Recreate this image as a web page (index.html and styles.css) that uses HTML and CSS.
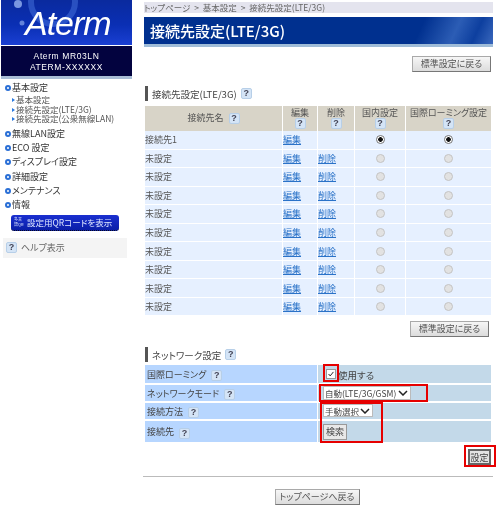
FILE: index.html
```html
<!DOCTYPE html>
<html lang="ja">
<head>
<meta charset="utf-8">
<title>接続先設定(LTE/3G)</title>
<link rel="stylesheet" href="styles.css">
</head>
<body>
<aside class="side">
  <div class="logo">
    <svg class="logo-art" viewBox="0 0 130 45" aria-hidden="true">
      <circle cx="52" cy="2" r="22" fill="none" stroke="#4f7fe6" stroke-opacity=".45" stroke-width="6"/>
      <circle cx="17" cy="4" r="4" fill="#9fbcf5" fill-opacity=".75"/>
      <circle cx="21" cy="23" r="2.5" fill="#9fbcf5" fill-opacity=".6"/>
    </svg>
    <span class="logo-text">Aterm</span>
  </div>
  <div class="model">Aterm MR03LN<br>ATERM-XXXXXX</div>
  <div class="model-foot"></div>
  <nav class="menu">
    <div class="m m-first"><i class="dot"></i>基本設定</div>
    <div class="s"><i class="tri"></i>基本設定</div>
    <div class="s"><i class="tri"></i>接続先設定(LTE/3G)</div>
    <div class="s s-last"><i class="tri"></i>接続先設定(公衆無線LAN)</div>
    <div class="m"><i class="dot"></i>無線LAN設定</div>
    <div class="m"><i class="dot"></i>ECO 設定</div>
    <div class="m"><i class="dot"></i>ディスプレイ設定</div>
    <div class="m"><i class="dot"></i>詳細設定</div>
    <div class="m"><i class="dot"></i>メンテナンス</div>
    <div class="m"><i class="dot"></i>情報</div>
  </nav>
  <div class="qr"><span class="qr-mark">多言<br>語QR</span><span>設定用QRコードを表示</span></div>
  <div class="help"><span class="q">?</span>ヘルプ表示</div>
</aside>

<main class="main">
  <div class="crumb">トップページ &gt; 基本設定 &gt; 接続先設定(LTE/3G)</div>
  <h1 class="title">接続先設定(LTE/3G)</h1>
  <div class="title-foot"></div>

  <div class="btn-row top"><button class="btn wide">標準設定に戻る</button></div>

  <h2 class="sec first"><span>接続先設定(LTE/3G)</span><span class="q">?</span></h2>
  <table class="list">
    <colgroup><col class="c1"><col class="c2"><col class="c3"><col class="c4"><col class="c5"></colgroup>
    <thead>
      <tr>
        <th>接続先名<span class="q gap">?</span></th>
        <th>編集<br><span class="q">?</span></th>
        <th>削除<br><span class="q">?</span></th>
        <th>国内設定<br><span class="q">?</span></th>
        <th>国際ローミング設定<br><span class="q">?</span></th>
      </tr>
    </thead>
    <tbody>
      <tr><td>接続先1</td><td><a href="#">編集</a></td><td></td><td class="ctr"><i class="radio on"></i></td><td class="ctr"><i class="radio on"></i></td></tr>
      <tr><td>未設定</td><td><a href="#">編集</a></td><td><a href="#">削除</a></td><td class="ctr"><i class="radio"></i></td><td class="ctr"><i class="radio"></i></td></tr>
      <tr><td>未設定</td><td><a href="#">編集</a></td><td><a href="#">削除</a></td><td class="ctr"><i class="radio"></i></td><td class="ctr"><i class="radio"></i></td></tr>
      <tr><td>未設定</td><td><a href="#">編集</a></td><td><a href="#">削除</a></td><td class="ctr"><i class="radio"></i></td><td class="ctr"><i class="radio"></i></td></tr>
      <tr><td>未設定</td><td><a href="#">編集</a></td><td><a href="#">削除</a></td><td class="ctr"><i class="radio"></i></td><td class="ctr"><i class="radio"></i></td></tr>
      <tr><td>未設定</td><td><a href="#">編集</a></td><td><a href="#">削除</a></td><td class="ctr"><i class="radio"></i></td><td class="ctr"><i class="radio"></i></td></tr>
      <tr><td>未設定</td><td><a href="#">編集</a></td><td><a href="#">削除</a></td><td class="ctr"><i class="radio"></i></td><td class="ctr"><i class="radio"></i></td></tr>
      <tr><td>未設定</td><td><a href="#">編集</a></td><td><a href="#">削除</a></td><td class="ctr"><i class="radio"></i></td><td class="ctr"><i class="radio"></i></td></tr>
      <tr><td>未設定</td><td><a href="#">編集</a></td><td><a href="#">削除</a></td><td class="ctr"><i class="radio"></i></td><td class="ctr"><i class="radio"></i></td></tr>
      <tr><td>未設定</td><td><a href="#">編集</a></td><td><a href="#">削除</a></td><td class="ctr"><i class="radio"></i></td><td class="ctr"><i class="radio"></i></td></tr>
    </tbody>
  </table>

  <div class="btn-row mid"><button class="btn wide">標準設定に戻る</button></div>

  <h2 class="sec second"><span>ネットワーク設定</span><span class="q">?</span></h2>
  <table class="net">
    <colgroup><col class="n1"><col></colgroup>
    <tr class="r1">
      <th>国際ローミング<span class="q gap">?</span></th>
      <td><span class="check-wrap"><i class="check"><svg viewBox="0 0 10 10" aria-hidden="true"><path d="M2 5l2 2.4L8 2.4" fill="none" stroke="#222" stroke-width="1.2"/></svg></i><span class="check-label">使用する</span><b class="mark mark-check"></b></span></td>
    </tr>
    <tr class="r2">
      <th>ネットワークモード<span class="q gap">?</span></th>
      <td><span class="sel-wrap"><select class="sel-a"><option>自動(LTE/3G/GSM)</option></select><b class="mark mark-mode"></b></span></td>
    </tr>
    <tr class="r3">
      <th>接続方法<span class="q gap">?</span></th>
      <td><span class="sel-wrap"><select class="sel-b"><option>手動選択</option></select><b class="mark mark-conn"></b></span></td>
    </tr>
    <tr class="r4">
      <th>接続先<span class="q gap">?</span></th>
      <td><button class="btn-plain">検索</button></td>
    </tr>
  </table>

  <div class="btn-row set"><span class="set-wrap"><button class="btn-set">設定</button><b class="mark mark-set"></b></span></div>

  <hr class="rule">
  <div class="btn-center"><button class="btn back">トップページへ戻る</button></div>
</main>
</body>
</html>
```
FILE: styles.css
```css
* { box-sizing: border-box; }
html, body { margin: 0; padding: 0; background: #fff; }
body {
  display: flex;
  width: 500px;
  height: 507px;
  overflow: hidden;
  font-family: "Noto Sans CJK JP", "Liberation Sans", sans-serif;
  font-feature-settings: "palt";
  font-size: 9px;
  color: #555;
  filter: blur(.25px);
}
.side { width: 131px; margin-left: 1px; flex: none; }
.logo {
  position: relative;
  height: 45px;
  overflow: hidden;
  background: linear-gradient(180deg, #0a2a9e 0%, #0a2fb4 55%, #1a3fd2 100%);
}
.logo-art { position: absolute; left: 0; top: 0; width: 130px; height: 45px; }
.logo-text {
  position: absolute;
  left: 24px;
  top: 3px;
  font-family: "Liberation Sans", sans-serif;
  font-style: italic;
  font-size: 34px;
  line-height: 40px;
  color: #fff;
  letter-spacing: -1px;
}
.model {
  height: 30px;
  margin-top: 1px;
  background: #03033f;
  color: #fff;
  text-align: center;
  font-family: "Liberation Sans", sans-serif;
  font-size: 8.5px;
  line-height: 10.5px;
  padding-top: 5px;
  letter-spacing: .6px;
}
.model-foot { height: 3px; background: #a9bdd6; }
.menu { padding-top: 1px; color: #333; }
.m { position: relative; height: 14.3px; line-height: 14px; padding-left: 11px; font-size: 9px; white-space: nowrap; color: #333; }
.m-first { margin-top: 1px; }
.s { position: relative; height: 9.5px; line-height: 9.5px; padding-left: 15px; font-size: 8.5px; white-space: nowrap; color: #555; }
.s-last { margin-bottom: 3px; }
.dot {
  position: absolute;
  left: 4px;
  top: 4px;
  width: 6px;
  height: 6px;
  border-radius: 50%;
  border: 2px solid #2a6fd6;
  background: #fff;
}
.tri {
  position: absolute;
  left: 11px;
  top: 3px;
  border-left: 3px solid #2a7ae0;
  border-top: 2px solid transparent;
  border-bottom: 2px solid transparent;
}
.qr {
  display: flex;
  align-items: center;
  gap: 4px;
  width: 108px;
  height: 16px;
  margin: 2px 0 0 10px;
  padding-left: 3px;
  border-radius: 3px;
  background: linear-gradient(180deg, #1a2fd0 0%, #0a1ea8 100%);
  border-bottom: 1px dotted #000;
  color: #dfe8ff;
  font-size: 8.5px;
  white-space: nowrap;
}
.qr-mark { font-size: 4px; line-height: 5px; width: 9px; flex: none; }
.help {
  display: flex;
  align-items: center;
  gap: 4px;
  width: 124px;
  height: 20px;
  margin: 7px 0 0 2px;
  padding-left: 3px;
  background: #f4f4f4;
  font-size: 9px;
  color: #666;
}
.q {
  display: inline-block;
  width: 11px;
  height: 11px;
  border-radius: 2px;
  background: #d4e4f6;
  border: 1px solid #b7cfe8;
  color: #445;
  font-family: "Liberation Sans", sans-serif;
  font-size: 9px;
  font-weight: 700;
  line-height: 9px;
  text-align: center;
  vertical-align: middle;
}
.gap { margin-left: 5px; }

.main { width: 349px; margin-left: 12px; flex: none; padding-top: 2px; }
.crumb {
  height: 11px;
  line-height: 11px;
  background: #e4e4ee;
  color: #666;
  font-size: 8.5px;
  word-spacing: 2px;
  white-space: nowrap;
}
.title {
  margin: 4px 0 0;
  height: 27px;
  padding-left: 6px;
  line-height: 27px;
  background: linear-gradient(115deg, #00308f 0%, #00308f 78%, #2c5db5 88%, #0d3f9f 94%, #3a68bd 100%);
  color: #fff;
  font-size: 15px;
  font-weight: 500;
}
.title-foot { height: 3px; background: #9fbcd8; }
.btn-row { display: flex; justify-content: flex-end; }
.top { margin-top: 9px; padding-right: 2px; }
.mid { margin-top: 5px; padding-right: 4px; }
.btn {
  height: 16px;
  padding: 0;
  border: 1px solid #a9a9a9;
  border-right-color: #777;
  border-bottom-color: #777;
  background: linear-gradient(180deg, #f6f6f6, #dcdcdc);
  color: #555;
  font-family: inherit;
  font-feature-settings: inherit;
  font-size: 9px;
  line-height: 14px;
}
.wide { width: 79px; }
.sec {
  display: flex;
  align-items: center;
  gap: 4px;
  height: 15px;
  margin: 0 0 0 1px;
  padding-left: 4px;
  border-left: 3px solid #555;
  font-size: 9.5px;
  font-weight: 400;
  color: #444;
  white-space: nowrap;
}
.first { margin-top: 14px; }
.second { margin-top: 10px; }

table { border-collapse: separate; table-layout: fixed; }
.list { width: 348px; margin: 5px 0 0; border-spacing: 1px 0; }
.c1 { width: 137px; } .c2 { width: 34px; } .c3 { width: 36px; } .c4 { width: 50px; } .c5 { width: 85px; }
.list th {
  height: 25px;
  padding: 0;
  background: #d8d4c8;
  color: #555;
  font-size: 9px;
  font-weight: 400;
  line-height: 10px;
  text-align: center;
}
.list td {
  height: 18.55px;
  padding: 0;
  background: #e6f0ff;
  border-bottom: 1.6px solid #fff;
  color: #555;
  font-size: 9px;
}
.list .ctr { text-align: center; padding: 0; line-height: 0; }
a { color: #2a72c8; font-size: 9px; }
.radio {
  display: inline-block;
  width: 9px;
  height: 9px;
  border-radius: 50%;
  border: 1px solid #c4c4c4;
  background: #e2e2e2;
}
.radio.on { border-color: #777; background: radial-gradient(circle, #111 0 2px, #fff 2.6px); }

.net { width: 348px; margin: 3px 0 0; border-spacing: 1px 0; }
.n1 { width: 172px; }
.net th {
  padding: 0 0 0 2px;
  background: #b7d6ff;
  border-bottom: 2px solid #fff;
  color: #444;
  font-size: 9px;
  font-weight: 400;
  text-align: left;
  white-space: nowrap;
}
.net td {
  padding: 0 0 0 5px;
  background: #c3d9e9;
  border-bottom: 2px solid #fff;
  font-size: 9.5px;
  color: #444;
}
.r1 th, .r1 td { height: 20px; }
.r2 th, .r2 td { height: 18px; }
.r3 th, .r3 td { height: 18px; }
.r4 th, .r4 td { height: 21px; border-bottom: 0; }
.check-wrap, .sel-wrap { position: relative; display: inline-block; line-height: 0; }
.check-wrap { display: flex; align-items: flex-end; gap: 2px; line-height: 12px; padding-left: 3px; }
.check-label { position: relative; top: 1px; }
.check {
  display: block;
  width: 10px;
  height: 10px;
  margin-bottom: 1px;
  background: #fff;
  border: 1px solid #999;
}
.check svg { display: block; width: 8px; height: 8px; }
select {
  appearance: none;
  margin: 0;
  font-family: "Noto Sans CJK JP", sans-serif;
  font-feature-settings: "palt";
  font-size: 8.5px;
  line-height: 12px;
  color: #444;
  background: #fff url("data:image/svg+xml,%3Csvg xmlns='http://www.w3.org/2000/svg' width='10' height='6'%3E%3Cpath d='M1 1l4 4 4-4' fill='none' stroke='%23222' stroke-width='1.5'/%3E%3C/svg%3E") no-repeat right 2px center;
  border: 1px solid #bbb;
  border-radius: 0;
  padding: 0 13px 0 1px;
}
.sel-a { width: 88px; height: 14px; }
.sel-b { width: 50px; height: 13px; }
.btn-plain {
  display: block;
  width: 24px;
  height: 16px;
  padding: 0;
  border: 1px solid #999;
  background: #e8e8e8;
  color: #444;
  font-family: inherit;
  font-feature-settings: inherit;
  font-size: 9px;
}
.mark { position: absolute; border: 2px solid #e60000; pointer-events: none; }
.mark-check { left: 0; top: -4px; width: 16px; height: 18px; }
.mark-mode { left: -4px; top: -2px; width: 109px; height: 18px; }
.mark-conn { left: -3px; top: -2px; width: 63px; height: 41px; }
.mark-set { left: -4px; top: -4px; width: 32px; height: 22px; }
.set { margin-top: 7px; padding-right: 2px; }
.set-wrap { position: relative; display: block; width: 23px; height: 16px; }
.btn-set {
  display: block;
  width: 23px;
  height: 16px;
  padding: 0;
  border: 2px solid #666;
  background: #e4e4e4;
  color: #444;
  font-family: inherit;
  font-feature-settings: inherit;
  font-size: 9px;
}
.rule { height: 1px; margin: 11px 0 0 -1px; border: 0; background: #bbb; }
.btn-center { display: flex; justify-content: center; margin-top: 12px; padding-right: 3px; }
.back { width: 85px; }
```
